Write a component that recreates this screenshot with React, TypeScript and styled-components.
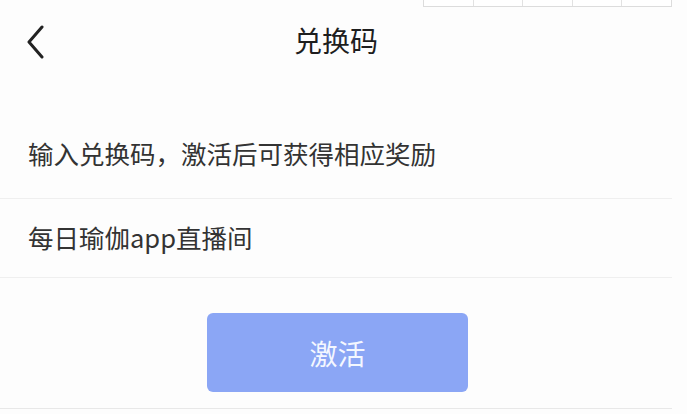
import React from 'react';
import styled, { createGlobalStyle } from 'styled-components';

/* 兑换码页面：返回 + 标题，说明文字，兑换码输入，激活按钮 */

const GlobalStyle = createGlobalStyle`
  body {
    margin: 0;
    background: #fdfdfd;
    font-family: "Noto Sans CJK SC", "Noto Sans", sans-serif;
  }
`;

const CELLS = [0, 1, 2, 3, 4];

function App() {
  return (
    <>
      <GlobalStyle />
      <Page>
        <KeyStrip>
          {CELLS.map(i => (
            <KeyCell key={i} />
          ))}
        </KeyStrip>
        <Header>
          <BackButton aria-label="返回">
            <svg width="20" height="34" viewBox="0 0 20 34" fill="none">
              <path
                d="M16 2 L3 17 L16 32"
                stroke="#222"
                strokeWidth="3"
                strokeLinecap="round"
                strokeLinejoin="round"
              />
            </svg>
          </BackButton>
          <Title>兑换码</Title>
          <span />
        </Header>
        <Hint>输入兑换码，激活后可获得相应奖励</Hint>
        <CodeRow>
          <CodeInput defaultValue="每日瑜伽app直播间" />
        </CodeRow>
        <ButtonBox>
          <ActivateButton type="button">激活</ActivateButton>
        </ButtonBox>
      </Page>
    </>
  );
}

const Page = styled.div`
  position: relative;
  width: 672px;
  background: #fdfdfd;
`;

const KeyStrip = styled.div`
  position: absolute;
  top: 0;
  left: 423px;
  width: 249px;
  height: 7px;
  display: flex;
  border: 1px solid #dcdcdc;
  border-top: none;
  box-sizing: border-box;
  background: #fff;
`;

const KeyCell = styled.div`
  flex: 1;
  border-left: 1px solid #e2e2e2;
  &:first-child {
    border-left: none;
  }
`;

const Header = styled.div`
  display: grid;
  grid-template-columns: 1fr auto 1fr;
  align-items: center;
  height: 84px;
  padding: 0 0 0 26px;
`;

const BackButton = styled.button`
  justify-self: start;
  display: flex;
  padding: 0;
  border: none;
  background: none;
  cursor: pointer;
`;

const Title = styled.h1`
  margin: 0 0 4px;
  font-size: 28px;
  font-weight: 400;
  color: #1e1e1e;
  line-height: 1;
  padding-right: 26px;
`;

const Hint = styled.p`
  margin: 0;
  padding: 52px 0 0 28px;
  height: 114px;
  box-sizing: border-box;
  font-size: 25.5px;
  line-height: 34px;
  color: #333;
`;

const CodeRow = styled.div`
  display: flex;
  align-items: center;
  height: 80px;
  padding: 0 28px 3px;
  box-sizing: border-box;
  border-top: 1px solid #efefef;
  border-bottom: 1px solid #efefef;
`;

const CodeInput = styled.input`
  flex: 1;
  border: none;
  outline: none;
  background: transparent;
  padding: 0;
  font-family: inherit;
  font-size: 25.5px;
  color: #333;
`;

const ButtonBox = styled.div`
  display: flex;
  justify-content: center;
  padding: 35px 0 16px;
  border-bottom: 1px solid #e8e8e8;
`;

const ActivateButton = styled.button`
  width: 261px;
  height: 79px;
  margin-left: 3px;
  border: none;
  border-radius: 6px;
  background: #8ba6f5;
  color: #f4f7ff;
  font-family: inherit;
  font-size: 28px;
  cursor: pointer;
`;

export default App;
